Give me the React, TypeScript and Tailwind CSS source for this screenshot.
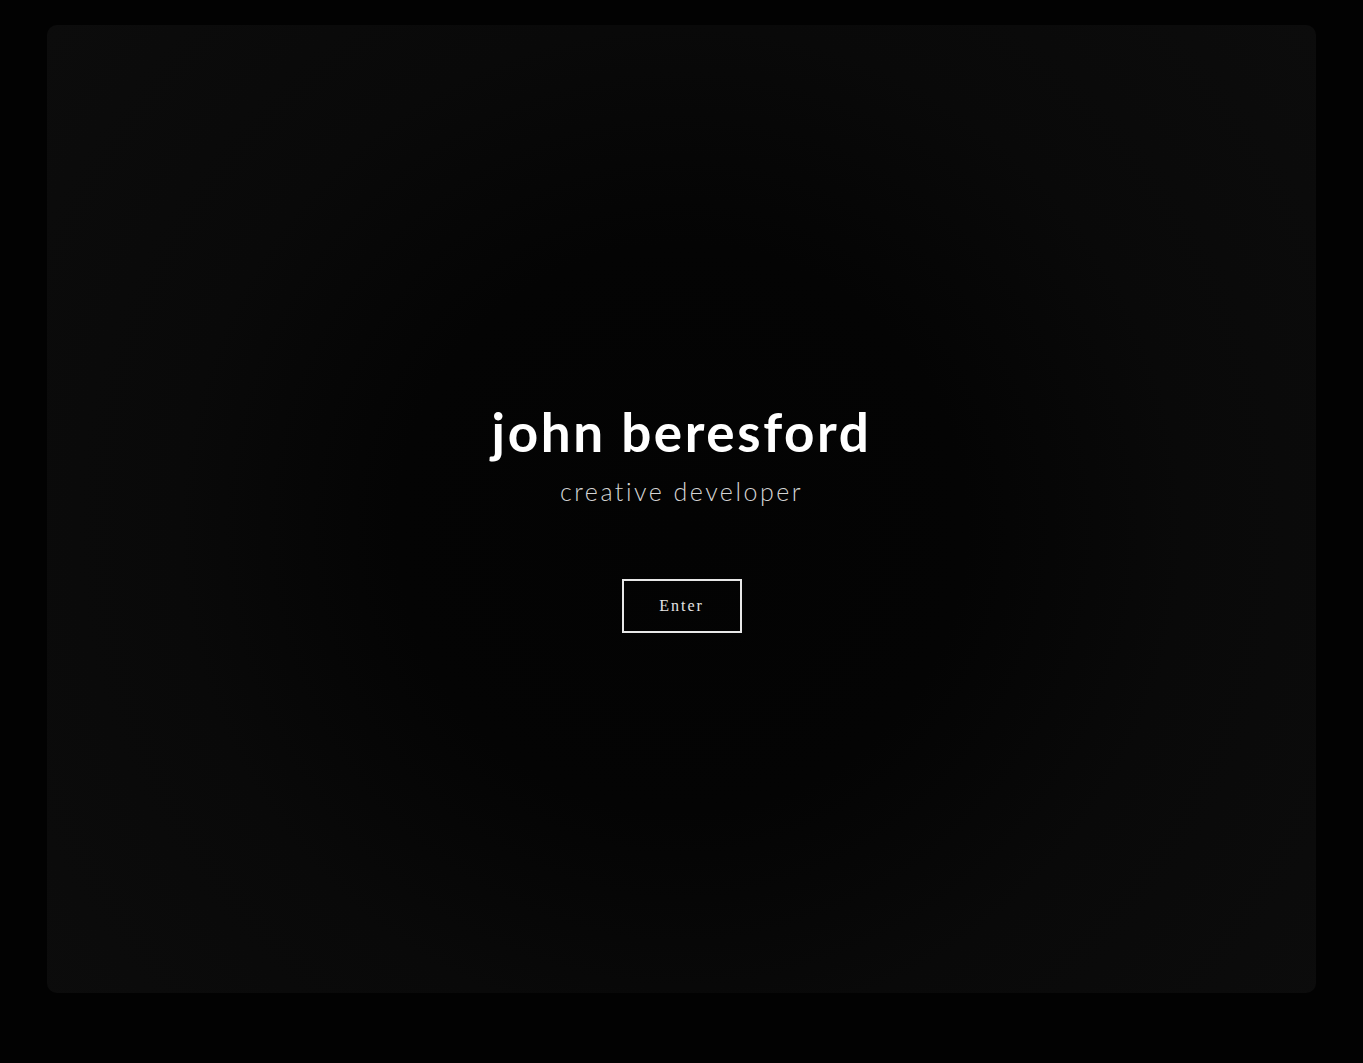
export default function App() {
  return (
    <div className="flex h-[1063px] w-full items-start bg-[#020202] px-[47px] pt-[25px]">
      <div className="flex h-[968px] w-full flex-col items-center rounded-[10px] bg-[radial-gradient(circle_at_50%_52%,#030303_0%,#040404_35%,#090909_62%,#0c0c0c_100%)] pt-[380px]">
        <h1 className="font-['Lato',sans-serif] text-[53px] font-bold leading-none tracking-[2.6px] text-white">
          john beresford
        </h1>
        <p className="mt-[21px] font-['Lato',sans-serif] text-[25px] font-light leading-none tracking-[2.5px] text-[#d4d4d4]">
          creative developer
        </p>
        <button className="mt-[75px] h-[54px] w-[120px] border-2 border-[#e8e8e8] font-['Liberation_Serif',serif] text-[16px] tracking-[2px] text-[#e4e4e4]">
          Enter
        </button>
      </div>
    </div>
  )
}
